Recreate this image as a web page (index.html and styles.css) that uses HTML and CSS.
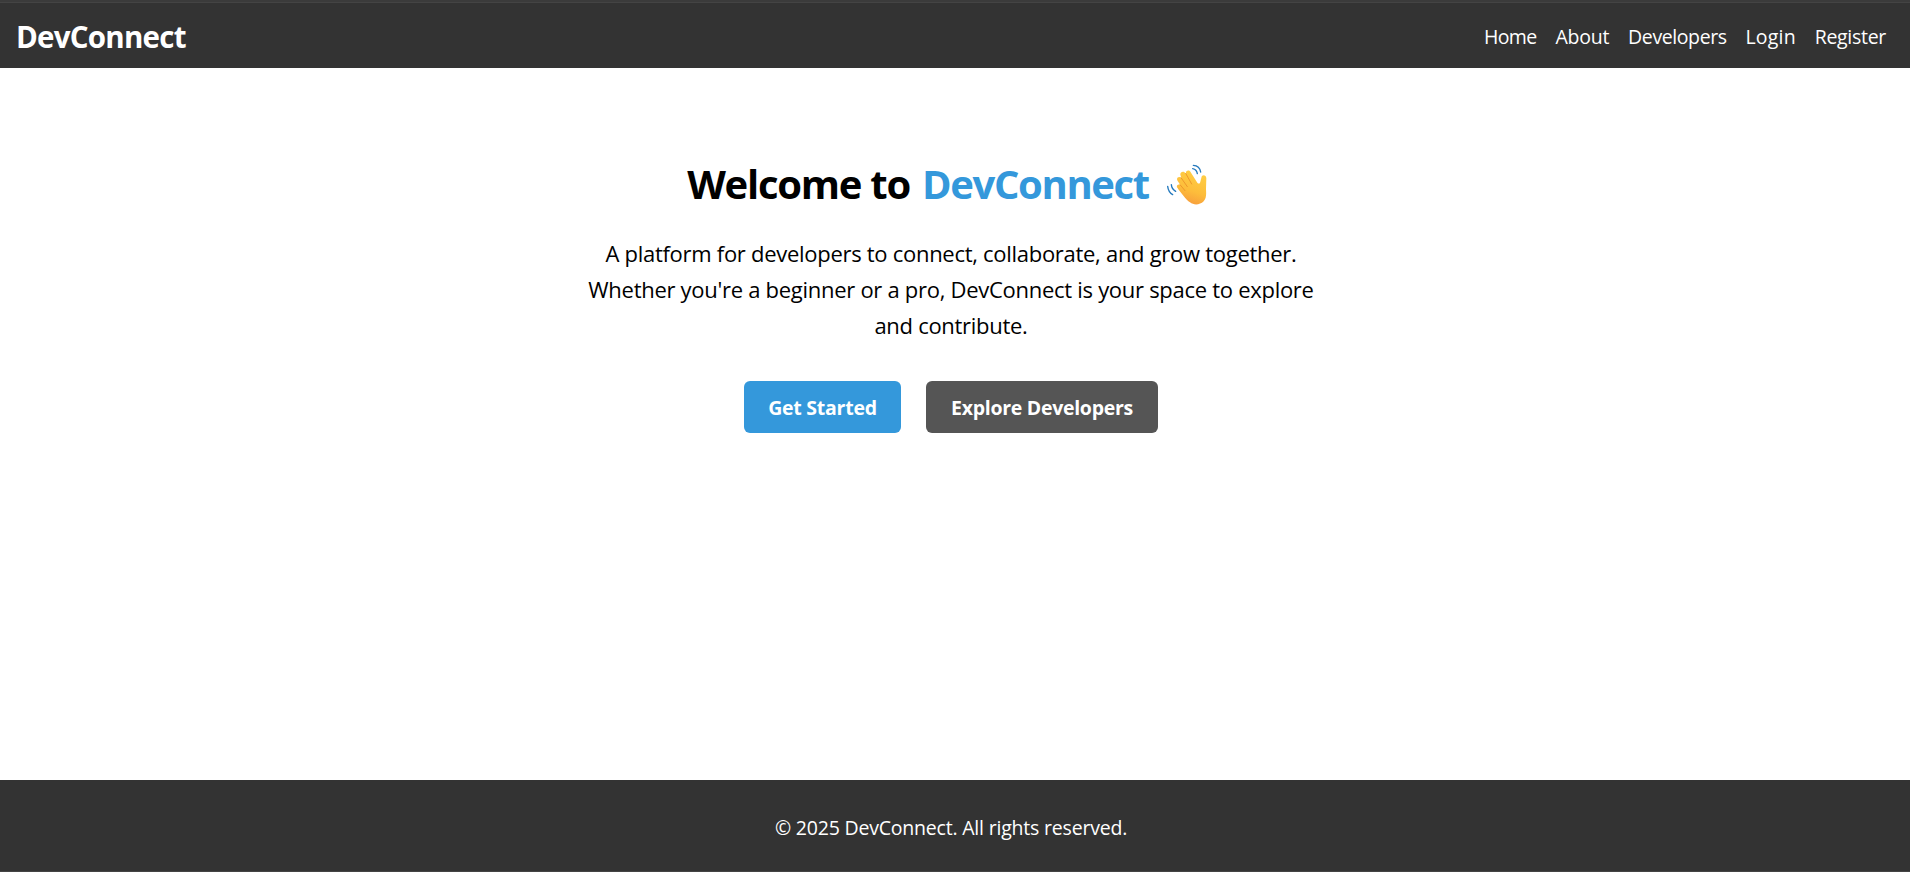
FILE: index.html
```html
<!DOCTYPE html>
<html lang="en">
<head>
<meta charset="utf-8">
<title>DevConnect</title>
<link rel="stylesheet" href="styles.css">
</head>
<body>
<header class="header">
  <div class="logo">DevConnect</div>
  <nav class="nav">
    <a class="home" href="#">Home</a>
    <a class="about" href="#">About</a>
    <a class="developers" href="#">Developers</a>
    <a class="login" href="#">Login</a>
    <a class="register" href="#">Register</a>
  </nav>
</header>
<main class="hero">
  <h1 class="title">
    <span>Welcome to</span>
    <span class="brand">DevConnect</span>
    <svg class="wave" viewBox="18 10 126 126" role="img" aria-label="Waving hand">
      <defs>
        <linearGradient id="skin" x1="0.7" y1="0" x2="0.4" y2="1">
          <stop offset="0" stop-color="#ffcf45"/>
          <stop offset="0.6" stop-color="#fdbd3b"/>
          <stop offset="1" stop-color="#f79c3c"/>
        </linearGradient>
      </defs>
      <g fill="none" stroke="#2479bd" stroke-width="4" stroke-linecap="round">
        <path d="M23 80Q25 97 38 105"/>
        <path d="M34 75Q35 88 47 95"/>
        <path d="M100 17Q119 18 122 37"/>
        <path d="M98 27Q110 29 112 42"/>
      </g>
      <path fill="url(#skin)" d="M52 84C47 77 56 71 61 76L53 64C47 55 57 48 64 55L62 48C57 37 71 31 77 41L79 44C74 33 88 28 93 39L112 69C116 74 120 72 121 66L124 54C126 43 139 46 139 56L138 89C139 106 139 116 131 125C119 137 101 137 90 128C78 119 64 101 52 84Z"/>
      <path d="M60 75L75 93M63 54L82 81M77 41L95 73" fill="none" stroke="#e98f28" stroke-width="2.5" stroke-linecap="round"/>
    </svg>
  </h1>
  <p class="intro">A platform for developers to connect, collaborate, and grow together. Whether you're a beginner or a pro, DevConnect is your space to explore and contribute.</p>
  <div class="actions">
    <a class="btn primary" href="#">Get Started</a>
    <a class="btn secondary" href="#">Explore Developers</a>
  </div>
</main>
<footer class="footer">© 2025 DevConnect. All rights reserved.</footer>
</body>
</html>
```
FILE: styles.css
```css
* { box-sizing: border-box; }

body {
  margin: 0;
  height: 872px;
  display: flex;
  flex-direction: column;
  overflow: hidden;
  background: #fff;
  color: #000;
  font-family: "Open Sans", "Noto Sans", sans-serif;
  font-size: 19.5px;
}

a { color: inherit; text-decoration: none; }

.header {
  height: 68px;
  padding: 4px 24px 0 16px;
  display: flex;
  align-items: center;
  justify-content: space-between;
  background: linear-gradient(#3b3b3b 2px, #444 2px 3px, #333 3px);
  color: #fff;
}

.logo {
  font-size: 29.5px;
  font-weight: 700;
  letter-spacing: -0.76px;
}

.nav { display: flex; gap: 18.8px; }
.home { letter-spacing: -0.63px; }
.about { letter-spacing: -0.2px; }
.developers { letter-spacing: -0.4px; }
.login { letter-spacing: 0.2px; }
.register { letter-spacing: -0.29px; }

.hero {
  flex: 1;
  padding: 88px 8px 0 0;
  display: flex;
  flex-direction: column;
  align-items: center;
}

.title {
  margin: 0;
  height: 55px;
  display: flex;
  align-items: center;
  font-size: 40px;
  line-height: 55px;
  letter-spacing: -1.25px;
}

.brand {
  margin-left: 12px;
  color: #3498db;
  letter-spacing: -1.35px;
}

.wave {
  width: 42px;
  height: 42px;
  margin: 1px 7px 0 17px;
}

.intro {
  width: 750px;
  margin: 24px 0 38px;
  font-size: 22px;
  line-height: 36px;
  letter-spacing: -0.285px;
  text-align: center;
}

.actions { display: flex; gap: 25px; }

.btn {
  height: 52px;
  display: flex;
  align-items: center;
  justify-content: center;
  border-radius: 6px;
  color: #fff;
  font-weight: 700;
}

.primary {
  width: 157px;
  background: #3498db;
  letter-spacing: -0.25px;
}

.secondary {
  width: 232px;
  background: #555;
  letter-spacing: -0.29px;
}

.footer {
  height: 92px;
  padding: 3px 8px 0 0;
  display: flex;
  align-items: center;
  justify-content: center;
  border-bottom: 1px solid #444;
  background: #333;
  color: #fff;
  letter-spacing: -0.2px;
}
```
